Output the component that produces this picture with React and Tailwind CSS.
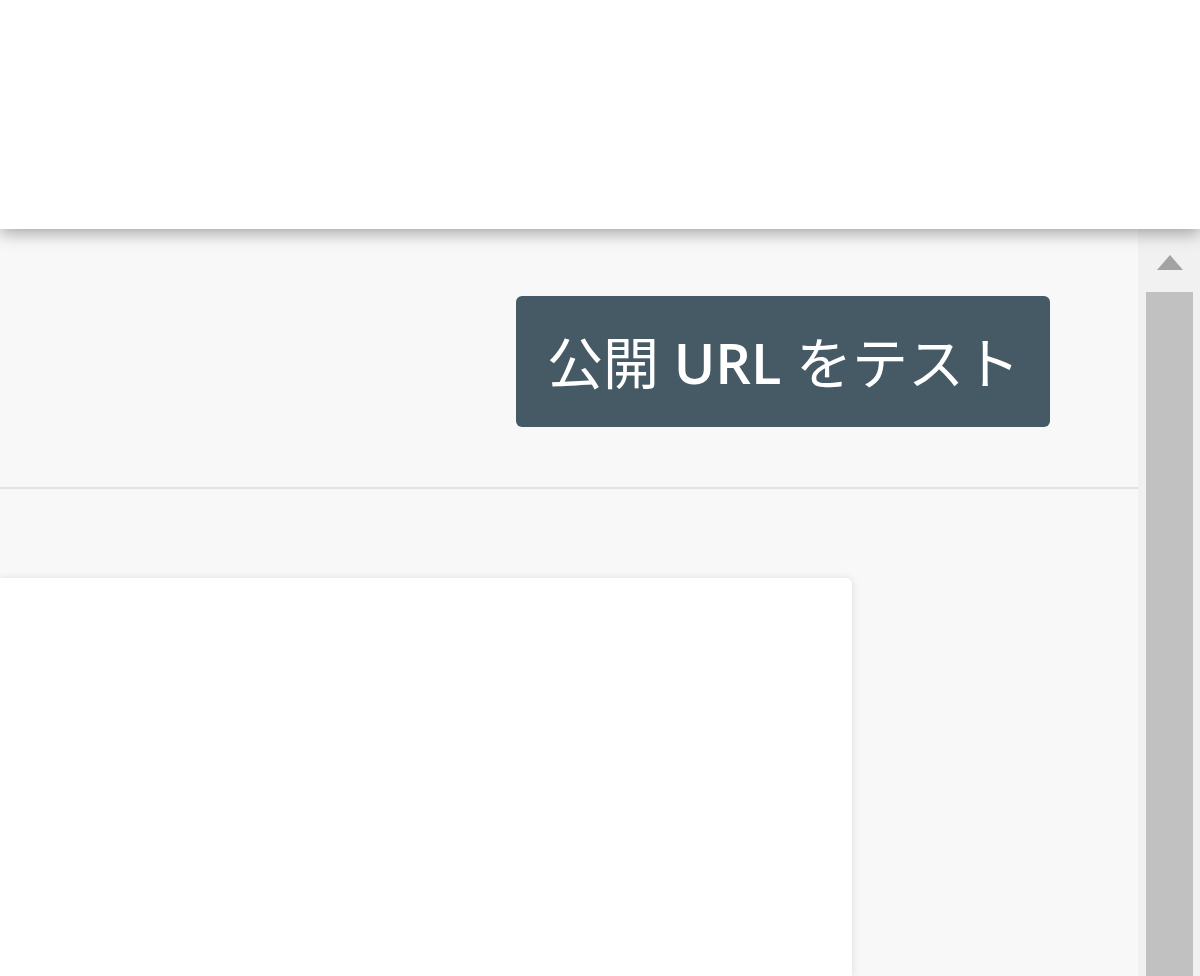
const ScrollArrow = () => (
    <svg width="26" height="15" viewBox="0 0 26 15">
        <polygon points="13,0 26,15 0,15" fill="#a3a3a3" />
    </svg>
);

const App = () => {
    return (
        <div
            className="w-full h-[976px] flex flex-col overflow-hidden bg-[#f8f8f8]"
            style={{ fontFamily: '"Open Sans", "Noto Sans CJK JP", sans-serif' }}
        >
            {/* HEADER */}
            <div className="h-[229px] shrink-0 bg-white relative z-10 shadow-[0_4px_16px_rgba(0,0,0,0.35)]" />

            <div className="flex flex-1 min-h-0">
                {/* MAIN */}
                <div className="flex-1 flex flex-col">
                    <div className="flex justify-end pt-[67px] pr-[88px] pb-[60px]">
                        <button className="h-[131px] pl-[31px] pr-[30px] rounded-[6px] bg-[#455a64] text-white text-[56px] leading-none">
                            公開 <span className="font-semibold">URL</span> をテスト
                        </button>
                    </div>

                    <div className="h-[2px] bg-[#e2e2e2]" />

                    <div className="flex flex-1 pt-[89px] pr-[286px]">
                        <div className="flex-1 bg-white rounded-tr-[6px] shadow-[0_1px_8px_rgba(0,0,0,0.12)]" />
                    </div>
                </div>

                {/* SCROLLBAR */}
                <div className="w-[62px] shrink-0 flex flex-col bg-[#f1f1f1]">
                    <div className="h-[63px] flex justify-center pt-[26px] pl-[1px]">
                        <ScrollArrow />
                    </div>
                    <div className="flex-1 ml-[8px] mr-[7px] bg-[#c1c1c1]" />
                </div>
            </div>
        </div>
    );
};

export default App;
